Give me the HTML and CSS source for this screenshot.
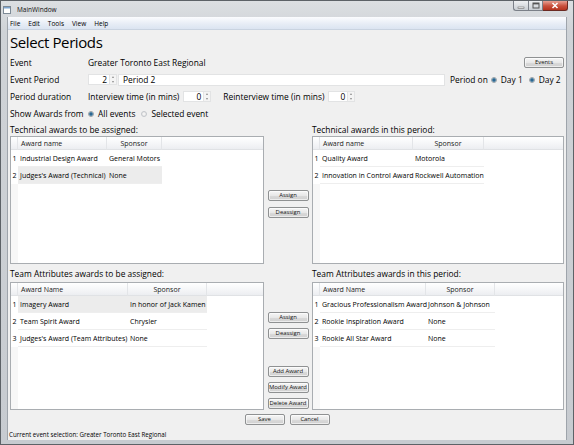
FILE: index.html
```html
<!DOCTYPE html>
<html>
<head>
<meta charset="utf-8">
<link rel="stylesheet" href="styles.css">
</head>
<body>
<div class="win">
  <div class="titlebar">
    <svg class="appicon" width="8" height="8" viewBox="0 0 8 8"><rect x="0.5" y="0.5" width="7" height="7" fill="#fff" stroke="#7d8a96"/><rect x="1" y="1" width="6" height="1.5" fill="#7ea6d0"/></svg>
    <span class="wtitle">MainWindow</span>
    <div class="caps">
      <div class="cap mm"><svg width="8" height="6" viewBox="0 0 8 6"><rect x="1" y="4" width="6" height="1.4" fill="#fff" stroke="#555" stroke-width="0.5"/></svg></div>
      <div class="cap mx"><svg width="8" height="7" viewBox="0 0 8 7"><rect x="1" y="1" width="6" height="5" fill="none" stroke="#555" stroke-width="1"/><rect x="1" y="1" width="6" height="1.4" fill="#555"/></svg></div>
      <div class="cap cl"><svg width="8" height="7" viewBox="0 0 8 7"><path d="M1.5 1 L6.5 6 M6.5 1 L1.5 6" stroke="#fff" stroke-width="1.5"/></svg></div>
    </div>
  </div>
  <div class="client">
    <div class="menubar">
      <span class="mi">File</span><span class="mi">Edit</span><span class="mi">Tools</span><span class="mi">View</span><span class="mi">Help</span>
    </div>
    <div class="main">
      <h1 class="heading">Select Periods</h1>
      <div class="row">
        <span class="lbl">Event</span>
        <span>Greater Toronto East Regional</span>
        <button class="btn events">Events</button>
      </div>
      <div class="row">
        <span class="lbl">Event Period</span>
        <div class="spin w29"><span>2</span><div class="arrows"><i class="up"></i><i class="dn"></i></div></div>
        <div class="edit">Period 2</div>
        <span class="periodon">Period on</span>
        <span class="radio on"></span><span class="rtext">Day 1</span>
        <span class="radio on"></span><span class="rtext">Day 2</span>
      </div>
      <div class="row">
        <span class="lbl">Period duration</span>
        <span>Interview time (in mins)</span>
        <div class="spin w28 sp1"><span>0</span><div class="arrows"><i class="up"></i><i class="dn"></i></div></div>
        <span class="reint">Reinterview time (in mins)</span>
        <div class="spin w27 sp2"><span>0</span><div class="arrows"><i class="up"></i><i class="dn"></i></div></div>
      </div>
      <div class="row">
        <span class="lbl">Show Awards from</span>
        <span class="radio on first"></span><span class="rtext">All events</span>
        <span class="radio off"></span><span class="rtext">Selected event</span>
      </div>
      <div class="grid">
        <div class="glbl">Technical awards to be assigned:</div>
        <div></div>
        <div class="glbl">Technical awards in this period:</div>

        <div class="tbl t1">
          <div class="hd corner"></div><div class="hd">Award name</div><div class="hd c">Sponsor</div><div class="hd fill"></div>
          <div class="rn">1</div><div class="cell">Industrial Design Award</div><div class="cell">General Motors</div><div></div>
          <div class="rn">2</div><div class="cell sel">Judges's Award (Technical)</div><div class="cell sel">None</div><div></div>
        </div>
        <div class="mid tech">
          <button class="btn mb">Assign</button>
          <button class="btn mb">Deassign</button>
        </div>
        <div class="tbl t2">
          <div class="hd corner"></div><div class="hd">Award name</div><div class="hd c">Sponsor</div><div class="hd fill"></div>
          <div class="rn">1</div><div class="cell">Quality Award</div><div class="cell">Motorola</div><div></div>
          <div class="rn">2</div><div class="cell">Innovation in Control Award</div><div class="cell">Rockwell Automation</div><div></div>
        </div>

        <div class="glbl low">Team Attributes awards to be assigned:</div>
        <div></div>
        <div class="glbl low">Team Attributes awards in this period:</div>

        <div class="tbl t3">
          <div class="hd corner"></div><div class="hd">Award Name</div><div class="hd c">Sponsor</div><div class="hd fill"></div>
          <div class="rn">1</div><div class="cell sel">Imagery Award</div><div class="cell sel">In honor of Jack Kamen</div><div></div>
          <div class="rn">2</div><div class="cell">Team Spirit Award</div><div class="cell">Chrysler</div><div></div>
          <div class="rn">3</div><div class="cell">Judges's Award (Team Attributes)</div><div class="cell">None</div><div></div>
        </div>
        <div class="mid team">
          <button class="btn mb">Assign</button>
          <button class="btn mb">Deassign</button>
          <div class="lower">
            <button class="btn mb">Add Award</button>
            <button class="btn mb">Modify Award</button>
            <button class="btn mb">Delete Award</button>
          </div>
        </div>
        <div class="tbl t4">
          <div class="hd corner"></div><div class="hd">Award Name</div><div class="hd c">Sponsor</div><div class="hd fill"></div>
          <div class="rn">1</div><div class="cell">Gracious Professionalism Award</div><div class="cell">Johnson &amp; Johnson</div><div></div>
          <div class="rn">2</div><div class="cell">Rookie Inspiration Award</div><div class="cell">None</div><div></div>
          <div class="rn">3</div><div class="cell">Rookie All Star Award</div><div class="cell">None</div><div></div>
        </div>
      </div>
      <div class="footer">
        <button class="btn fb">Save</button>
        <button class="btn fb">Cancel</button>
      </div>
    </div>
    <div class="status">Current event selection: Greater Toronto East Regional</div>
  </div>
</div>
</body>
</html>
```
FILE: styles.css
```css
html, body { margin: 0; padding: 0; }
body {
  width: 574px; height: 445px; overflow: hidden;
  font-family: "Open Sans", "Noto Sans", sans-serif;
  font-size: 8.4px; color: #000; background: #fff;
}
.win {
  width: 574px; height: 445px; box-sizing: border-box;
  border: 1px solid #5d6267;
  background: linear-gradient(#dcdfe2, #cfd3d7 30px, #c7cbd0);
  display: flex; flex-direction: column;
  padding: 0 6px 5px 6px;
}
.titlebar {
  height: 16px; margin: 0 -6px; flex: none;
  display: flex; align-items: center;
  padding: 0 5px 0 2px;
}
.appicon { margin-right: 6px; margin-top: 1px; }
.wtitle { font-size: 6.5px; color: #111; }
.caps { margin-left: auto; align-self: flex-start; display: flex; }
.cap {
  height: 10px; display: flex; align-items: center; justify-content: center;
  border: 1px solid #7b8088; border-top: none; box-sizing: border-box;
}
.mm { width: 15px; border-radius: 0 0 0 3px; background: linear-gradient(#eef0f2, #c9ced3); border-right: none; }
.mx { width: 15px; background: linear-gradient(#eef0f2, #c9ced3); }
.cl { width: 25px; border-radius: 0 0 3px 0; border-color: #6b2a22; background: linear-gradient(#e8a093, #c8503c 55%, #b5331f); border-left: none; }
.client {
  flex: 1; display: flex; flex-direction: column;
  background: #f0f0f0;
  border-left: 1px solid #9ea4ab; border-right: 1px solid #9ea4ab;
}
.menubar {
  height: 12px; flex: none;
  background: linear-gradient(#fbfcfe, #e6ecf5 60%, #dbe4f1);
  border-bottom: 1px solid #c9d3e0;
  display: flex; align-items: center;
  font-size: 6.5px; padding-left: 2px;
}
.mi { margin-right: 8px; }
.main {
  flex: 1; display: flex; flex-direction: column;
  padding: 0 2px 0 2px;
}
.heading {
  margin: 0; height: 24px; flex: none;
  font-size: 15px; font-weight: normal; letter-spacing: -0.4px;
  line-height: 24px; padding-top: 0; box-sizing: border-box;
}
.row {
  height: 17px; flex: none;
  display: flex; align-items: center;
}
.lbl { width: 78px; flex: none; }
.btn {
  font-family: inherit; font-size: 5.9px; color: #111;
  border: 1px solid #8f9192; border-radius: 2px;
  background: linear-gradient(#f6f6f6, #e8e8e8 50%, #dadada 51%, #d0d0d0);
  padding: 0; margin: 0; height: 11px; line-height: 9px;
  box-shadow: inset 0 0 0 1px rgba(255,255,255,0.6);
}
.events { margin-left: auto; width: 40px; height: 11px; }
.spin {
  height: 11px; background: #fff; box-sizing: border-box;
  border: 1px solid #e2e3e4;
  display: flex; align-items: center; justify-content: flex-end;
}
.spin span { padding-right: 2px; }
.arrows { width: 6px; height: 9px; display: flex; flex-direction: column; justify-content: space-between; align-items: center; background: #f4f4f4; border-left: 1px solid #e4e4e4; }
.arrows i { width: 0; height: 0; border-left: 1.5px solid transparent; border-right: 1.5px solid transparent; }
.arrows i.up { border-bottom: 2px solid #8a8a8a; margin-top: 1px; }
.arrows i.dn { border-top: 2px solid #8a8a8a; margin-bottom: 1px; }
.w29 { width: 29px; }
.w28 { width: 28px; }
.w27 { width: 27px; }
.sp1 { margin-left: 4px; }
.reint { margin-left: 12px; }
.sp2 { margin-left: 4px; }
.edit {
  margin-left: 1px; width: 327px; height: 12px; box-sizing: border-box;
  background: #fff; border: 1px solid #e2e3e4;
  padding-left: 4px; line-height: 10px;
}
.periodon { margin-left: 5px; }
.radio {
  width: 6px; height: 6px; border-radius: 50%; box-sizing: border-box;
  border: 1px solid #9aa0a6; background: radial-gradient(#fafafa, #e0e0e0);
  margin-left: 3px; margin-right: 4px; flex: none;
}
.radio.on { background: radial-gradient(circle, #1f4f7a 0, #3d7fa8 1.5px, #dfe5ea 2.6px); }
.radio.first { margin-left: 0; }
.radio.off { margin-left: 6px; border-color: #c2c6ca; }
.rtext + .radio.on { margin-left: 6px; }
.grid {
  display: grid; flex: none;
  grid-template-columns: 254px 48px 252px;
  grid-template-rows: 14px 128px 18px 128px;
}
.glbl { display: flex; align-items: center; }
.tbl {
  box-sizing: border-box; border: 1px solid #a9adb1;
  background: linear-gradient(to right, #f7f7f7 7px, #fff 7px);
  display: grid; grid-template-rows: 13px; grid-auto-rows: 17px;
  align-content: start;
  font-size: 7px;
}
.t1 { grid-template-columns: 7px 89px 55px 1fr; }
.t2 { grid-template-columns: 7px 93px 71px 1fr; }
.t3 { grid-template-columns: 7px 110px 79px 1fr; }
.t4 { grid-template-columns: 7px 106px 69px 1fr; }
.hd {
  background: linear-gradient(#ffffff, #f4f5f7 60%, #eceef1);
  border-bottom: 1px solid #e0e2e5; border-right: 1px solid #e3e5e8;
  box-sizing: border-box; display: flex; align-items: center;
  padding-left: 3px; color: #222; white-space: nowrap;
}
.hd.c { justify-content: center; padding-left: 0; }
.hd.fill { border-right: none; }
.hd.corner { padding: 0; }
.rn { display: flex; align-items: center; justify-content: center; background: #fff; }
.cell {
  display: flex; align-items: center; padding-left: 2px;
  white-space: nowrap; border-bottom: 1px solid #eeeeee; box-sizing: border-box;
}
.cell.sel { background: #ececec; }
.mid { display: flex; flex-direction: column; align-items: center; }
.mb { width: 41px; flex: none; }
.tech { padding-top: 54px; gap: 6px; }
.team { padding-top: 30px; gap: 5px; }
.lower { margin-top: auto; display: flex; flex-direction: column; gap: 5px; padding-bottom: 1px; }
.footer {
  height: 17px; flex: none; display: flex; justify-content: center;
  gap: 5px; padding-top: 4px; box-sizing: border-box;
}
.fb { width: 40px; height: 11px; }
.status {
  height: 13px; flex: none; font-size: 6.2px;
  padding: 3px 0 0 1px; box-sizing: border-box; line-height: 10px;
}
```
